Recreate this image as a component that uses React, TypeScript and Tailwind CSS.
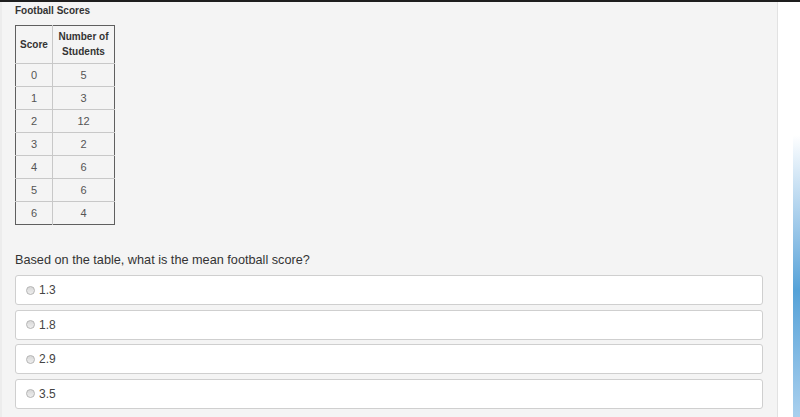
import React from "react";

const rows: [string, string][] = [
  ["0", "5"],
  ["1", "3"],
  ["2", "12"],
  ["3", "2"],
  ["4", "6"],
  ["5", "6"],
  ["6", "4"],
];

const answers = ["1.3", "1.8", "2.9", "3.5"];

export default function App() {
  return (
    <div
      className="w-[800px] h-[417px] overflow-hidden bg-white flex flex-col"
      style={{ fontFamily: '"Liberation Sans", Arial, sans-serif' }}
    >
      <div className="h-[2px] bg-[#1e1e1e] shrink-0" />
      <div className="flex flex-1 min-h-0">
        <div className="w-[778px] shrink-0 bg-[#f4f4f4] border-r border-[#e2e2e2] border-l-[2px] border-l-[#ececec] pl-[13px] pr-[14px] flex flex-col">
          <div className="h-[23px] flex items-center text-[10px] font-bold text-[#333] pb-[6px]">
            Football Scores
          </div>
          <table className="w-[100px] border-collapse border border-[#5f5f5f] text-center text-[#555]">
            <thead>
              <tr className="h-[38px]">
                <th className="w-[37px] border border-[#5f5f5f] border-r-[#c8c8c8] border-b-[#c8c8c8] text-[10px] font-bold text-[#333] leading-[15px]">
                  Score
                </th>
                <th className="border border-[#5f5f5f] border-l-[#c8c8c8] border-b-[#c8c8c8] text-[10px] font-bold text-[#333] leading-[15px] pb-[1px]">
                  Number of
                  <br />
                  Students
                </th>
              </tr>
            </thead>
            <tbody>
              {rows.map(([a, b], i) => (
                <tr key={i} className="h-[23px]">
                  <td className="border-r border-[#c8c8c8] border-t text-[11px]">{a}</td>
                  <td className="border-t border-[#c8c8c8] text-[11px]">{b}</td>
                </tr>
              ))}
            </tbody>
          </table>
          <div className="mt-[28px] text-[12.7px] text-[#333] leading-[15px]">
            Based on the table, what is the mean football score?
          </div>
          <div className="mt-[7px] flex flex-col gap-[4.5px]">
            {answers.map((a) => (
              <div
                key={a}
                className="h-[30px] w-[748px] bg-white border border-[#cfcfcf] rounded-[3px] flex items-center pl-[10px]"
              >
                <span className="w-[9px] h-[9px] rounded-full border border-[#b4b4b4] bg-gradient-to-b from-[#d8d8d8] to-[#eeeeee] shrink-0" />
                <span className="ml-[4px] text-[12px] text-[#444]">{a}</span>
              </div>
            ))}
          </div>
        </div>
        <div className="flex-1 flex justify-end">
          <div className="w-[7px] mt-[133px] bg-gradient-to-b from-[#ffffff] via-[#55a2d8] via-55% to-[#a9d0ee]" />
        </div>
      </div>
    </div>
  );
}
